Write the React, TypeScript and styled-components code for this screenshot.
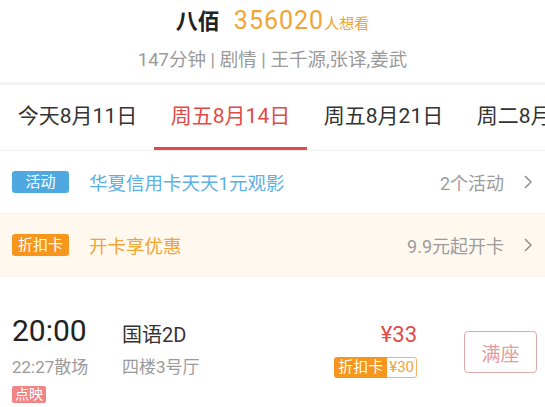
import React, { useState } from "react";
import styled, { createGlobalStyle } from "styled-components";

const GlobalStyle = createGlobalStyle`
  body {
    margin: 0;
    background: #fff;
    font-family: Roboto, "Noto Sans CJK SC", sans-serif;
    color: #222;
  }
`;

const Page = styled.div`
  width: 545px;
  overflow: hidden;
`;

const Header = styled.div`
  height: 85px;
  padding-top: 6px;
  box-sizing: border-box;
  text-align: center;
  border-bottom: 3px solid #f4f4f4;
`;

const TitleLine = styled.div`
  line-height: 30px;
  white-space: nowrap;
`;

const MovieName = styled.span`
  font-size: 22px;
  font-weight: 700;
  color: #222;
  margin-right: 14px;
`;

const WishCount = styled.span`
  font-size: 25px;
  letter-spacing: 1px;
  color: #f0a534;
`;

const WishLabel = styled.span`
  font-size: 15px;
  color: #f0a534;
`;

const SubLine = styled.div`
  margin-top: 8px;
  line-height: 26px;
  font-size: 18.5px;
  color: #9a9a9a;
`;

const TabBar = styled.div`
  display: flex;
  padding-left: 1px;
  border-bottom: 1px solid #eeeeee;
  overflow: hidden;
  white-space: nowrap;
`;

const Tab = styled.div<{ $active?: boolean }>`
  flex: 0 0 153px;
  height: 65px;
  box-sizing: border-box;
  line-height: 62px;
  text-align: center;
  font-size: 21px;
  color: ${(p) => (p.$active ? "#e24a47" : "#333")};
  border-bottom: 3px solid ${(p) => (p.$active ? "#e24a47" : "transparent")};
`;

const PromoRow = styled.div<{ $cream?: boolean }>`
  display: flex;
  align-items: center;
  height: 62px;
  padding: 0 13px 0 12px;
  background: ${(p) => (p.$cream ? "#fff8ef" : "#fff")};
  border-bottom: 1px solid ${(p) => (p.$cream ? "#fbf1e4" : "#f6f1ea")};
`;

const Tag = styled.span<{ $color: string }>`
  flex: 0 0 57px;
  height: 22px;
  line-height: 22px;
  border-radius: 3px;
  text-align: center;
  font-size: 15px;
  color: #fff;
  background: ${(p) => p.$color};
`;

const PromoText = styled.span<{ $color: string }>`
  flex: 1;
  margin-left: 20px;
  font-size: 18.5px;
  color: ${(p) => p.$color};
`;

const PromoMore = styled.span`
  font-size: 18px;
  color: #9c9c9c;
  margin-right: 20px;
`;

const Chevron = () => (
  <svg width="8" height="14" viewBox="0 0 8 14">
    <polyline points="1,1 7,7 1,13" fill="none" stroke="#8e8e8e" strokeWidth="1.5" />
  </svg>
);

const ShowRow = styled.div`
  display: flex;
  padding: 36px 8px 0 12px;
  height: 127px;
  box-sizing: border-box;
`;

const TimeCol = styled.div`
  width: 110px;
  display: flex;
  flex-direction: column;
  align-items: flex-start;
`;

const StartTime = styled.div`
  font-size: 30px;
  line-height: 36px;
  color: #222;
`;

const Muted = styled.div`
  margin-top: 6px;
  font-size: 17px;
  line-height: 24px;
  color: #9a9a9a;
`;

const Preview = styled.span`
  margin-top: 7px;
  padding: 0 3px;
  height: 17px;
  line-height: 17px;
  font-size: 14px;
  color: #fff;
  background: #f38486;
  border-radius: 2px;
`;

const HallCol = styled.div`
  flex: 1;
  padding-top: 8px;
`;

const Lang = styled.div`
  font-size: 20px;
  line-height: 28px;
  color: #333;
`;

const PriceCol = styled.div`
  display: flex;
  flex-direction: column;
  align-items: flex-end;
  padding-top: 8px;
  margin-right: 47px;
`;

const Price = styled.div`
  font-size: 22px;
  line-height: 28px;
  color: #e24a47;
`;

const CardPrice = styled.div`
  display: flex;
  margin-top: 8px;
  height: 21px;
  line-height: 21px;
  font-size: 15px;
  border-radius: 3px;
  overflow: hidden;
`;

const CardLabel = styled.span`
  padding: 0 4px;
  color: #fff;
  background: #f7961c;
`;

const CardValue = styled.span`
  padding: 0 2px;
  color: #f0a534;
  background: #fff;
  border: 1px solid #f4b660;
  border-left: none;
  border-radius: 0 3px 3px 0;
  line-height: 19px;
`;

const FullButton = styled.button`
  margin-top: 18px;
  width: 73px;
  height: 42px;
  border: 1px solid #dcaaaa;
  border-radius: 4px;
  background: #fff;
  color: #e39c9c;
  font-family: inherit;
  font-size: 19px;
  padding: 0;
`;

const dates = ["今天8月11日", "周五8月14日", "周五8月21日", "周二8月25日"];

export default function App() {
  const [active, setActive] = useState(1);
  return (
    <Page>
      <GlobalStyle />
      <Header>
        <TitleLine>
          <MovieName>八佰</MovieName>
          <WishCount>356020</WishCount>
          <WishLabel>人想看</WishLabel>
        </TitleLine>
        <SubLine>147分钟 | 剧情 | 王千源,张译,姜武</SubLine>
      </Header>
      <TabBar>
        {dates.map((d, i) => (
          <Tab key={d} $active={i === active} onClick={() => setActive(i)}>
            {d}
          </Tab>
        ))}
      </TabBar>
      <PromoRow>
        <Tag $color="#4ea9e0">活动</Tag>
        <PromoText $color="#5db0e2">华夏信用卡天天1元观影</PromoText>
        <PromoMore>2个活动</PromoMore>
        <Chevron />
      </PromoRow>
      <PromoRow $cream>
        <Tag $color="#f7961c">折扣卡</Tag>
        <PromoText $color="#f0a534">开卡享优惠</PromoText>
        <PromoMore>9.9元起开卡</PromoMore>
        <Chevron />
      </PromoRow>
      <ShowRow>
        <TimeCol>
          <StartTime>20:00</StartTime>
          <Muted>22:27散场</Muted>
          <Preview>点映</Preview>
        </TimeCol>
        <HallCol>
          <Lang>国语2D</Lang>
          <Muted>四楼3号厅</Muted>
        </HallCol>
        <PriceCol>
          <Price>¥33</Price>
          <CardPrice>
            <CardLabel>折扣卡</CardLabel>
            <CardValue>¥30</CardValue>
          </CardPrice>
        </PriceCol>
        <FullButton>满座</FullButton>
      </ShowRow>
    </Page>
  );
}
